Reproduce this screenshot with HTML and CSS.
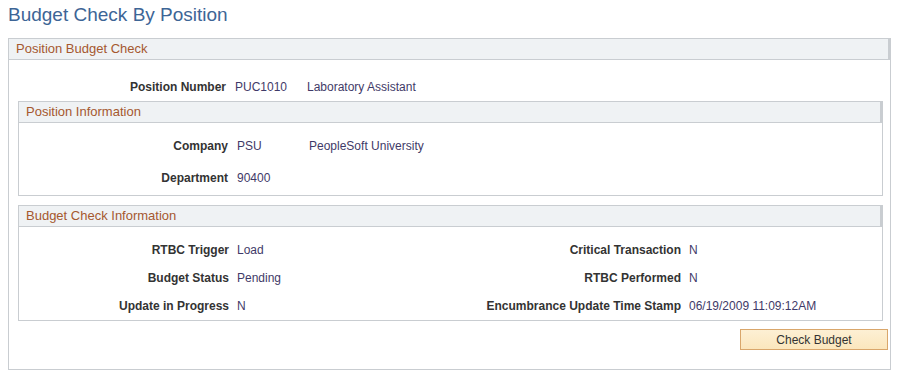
FILE: index.html
```html
<!DOCTYPE html>
<html lang="en">
<head>
  <meta charset="UTF-8">
  <title>Budget Check By Position</title>
  <link rel="stylesheet" href="styles.css">
</head>
<body>
  <h1 class="page-title">Budget Check By Position</h1>

  <div class="group outer">
    <div class="group-head">Position Budget Check</div>

    <div class="row top-row">
      <span class="label lbl-outer">Position Number</span>
      <span class="value code">PUC1010</span>
      <span class="value">Laboratory Assistant</span>
    </div>

    <div class="group inner pos-info">
      <div class="group-head">Position Information</div>
      <div class="pos-rows">
        <div class="row">
          <span class="label lbl-inner">Company</span>
          <span class="value code">PSU</span>
          <span class="value">PeopleSoft University</span>
        </div>
        <div class="row">
          <span class="label lbl-inner">Department</span>
          <span class="value code">90400</span>
        </div>
      </div>
    </div>

    <div class="group inner budget-info">
      <div class="group-head">Budget Check Information</div>
      <div class="budget-grid">
        <span class="label">RTBC Trigger</span>
        <span class="value">Load</span>
        <span class="label">Critical Transaction</span>
        <span class="value">N</span>

        <span class="label">Budget Status</span>
        <span class="value">Pending</span>
        <span class="label">RTBC Performed</span>
        <span class="value">N</span>

        <span class="label">Update in Progress</span>
        <span class="value">N</span>
        <span class="label">Encumbrance Update Time Stamp</span>
        <span class="value">06/19/2009 11:09:12AM</span>
      </div>
    </div>

    <div class="actions">
      <button class="btn">Check Budget</button>
    </div>
  </div>
</body>
</html>
```

FILE: styles.css
```css
/* Base */
body {
  font-family: Arial, "Liberation Sans", sans-serif;
  font-size: 12px;
  color: #333;
  background: #fff;
  margin: 0;
  padding: 0;
}
.page-title {
  font-size: 19px;
  font-weight: normal;
  color: #3d6596;
  margin: 3px 0 0 8px;
  line-height: 24px;
  height: 35px;
}
/* Group boxes */
.group {
  border: 1px solid #c9cdd1;
  background: #fff;
}
.group-head {
  height: 20px;
  line-height: 20px;
  padding-left: 7px;
  font-size: 13px;
  color: #a5582f;
  background: #eff2f4;
  border-bottom: 1px solid #c9cdd1;
  border-right: 2px solid #c9cdd1;
}
.outer {
  margin-left: 8px;
  width: 881px;
  height: 330px;
}
.inner {
  margin-left: 9px;
  width: 863px;
}
.pos-info {
  margin-top: 4px;
  height: 93px;
}
.budget-info {
  margin-top: 9px;
  height: 114px;
}
/* Rows */
.row {
  display: flex;
  align-items: center;
  height: 20px;
}
.top-row {
  margin-top: 17px;
}
.label {
  font-weight: bold;
  color: #333;
  text-align: right;
}
.lbl-outer {
  width: 217px;
}
.lbl-inner {
  width: 209px;
}
.value {
  color: #3f3a68;
}
.code {
  width: 72px;
  margin-left: 9px;
}
.pos-rows {
  display: flex;
  flex-direction: column;
  gap: 12px;
  padding-top: 13px;
}
.budget-grid {
  display: grid;
  grid-template-columns: 210px 1fr auto 193px;
  grid-auto-rows: 20px;
  row-gap: 8px;
  column-gap: 8px;
  align-items: center;
  padding-top: 13px;
}
/* Button */
.actions {
  display: flex;
  justify-content: flex-end;
  padding: 8px 2px 0 0;
}
.btn {
  font-family: Arial, "Liberation Sans", sans-serif;
  font-size: 12px;
  color: #333;
  width: 148px;
  height: 21px;
  padding: 0;
  background: linear-gradient(#fdf0d4, #fbe6bd);
  border: 1px solid #d9a66b;
  border-radius: 0;
}
```
